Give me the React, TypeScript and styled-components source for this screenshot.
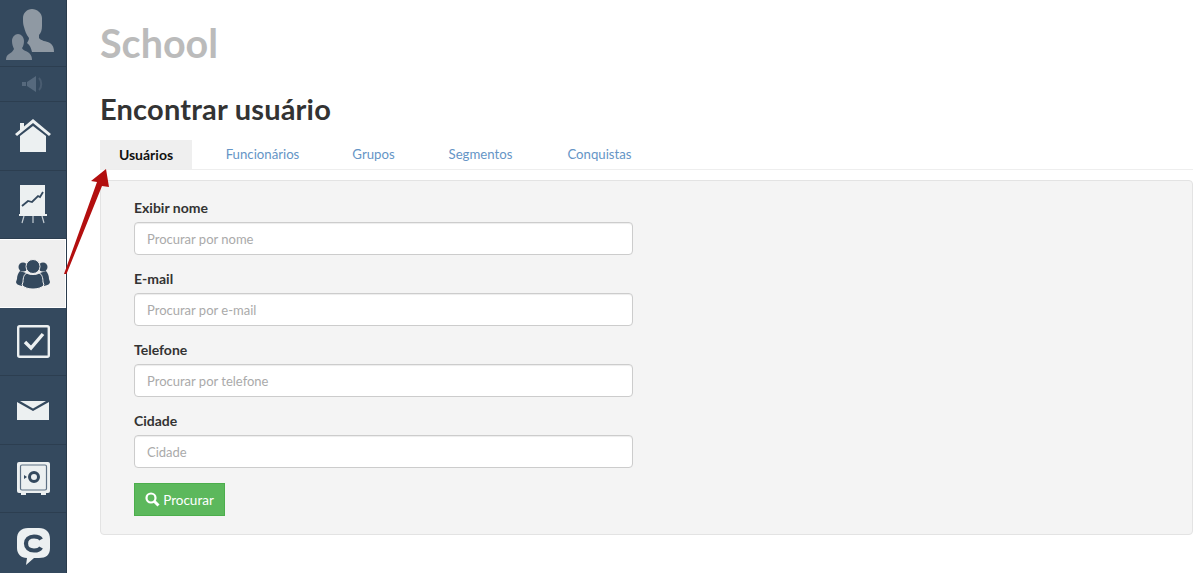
import { FC, ReactNode } from 'react';
import styled, { createGlobalStyle } from 'styled-components'

const GlobalStyle = createGlobalStyle`
  html, body {
    margin: 0;
    padding: 0;
    background: #fff;
    font-family: Lato, "Liberation Sans", sans-serif;
    color: #333;
  }
  * { box-sizing: border-box; }
`

const Page = styled.div`
  position: relative;
  display: flex;
  width: 1200px;
  height: 573px;
  overflow: hidden;
`

const Sidebar = styled.nav`
  flex: 0 0 67px;
  height: 573px;
  overflow: hidden;
  background: #34495e;
  border-right: 1px solid #2a3b4c;
`

const NavItem = styled.div<{ $h: number; $active?: boolean }>`
  display: flex;
  align-items: center;
  justify-content: center;
  height: ${p => p.$h}px;
  color: ${p => (p.$active ? '#34495e' : '#ecf0f1')};
  background: ${p => (p.$active ? '#efefef' : 'transparent')};
  border-bottom: 1px solid ${p => (p.$active ? '#fff' : '#2c3e50')};
  ${p => p.$active && 'border-top: 1px solid #fff; border-right: 1px solid #fff;'}
`

const Main = styled.main`
  flex: 1;
  padding: 0 7px 0 33px;
`

const Brand = styled.h1`
  margin: 0;
  padding-top: 21px;
  height: 82px;
  font-size: 39.5px;
  line-height: 44px;
  font-weight: 700;
  color: #bbb;
`

const Title = styled.h2`
  margin: 0;
  height: 58px;
  padding-top: 9px;
  font-size: 29px;
  line-height: 36px;
  font-weight: 700;
  letter-spacing: 0.2px;
  color: #333;
`

const Tabs = styled.div`
  display: flex;
  height: 30px;
  border-bottom: 1px solid #eee;
`

const Tab = styled.a<{ $active?: boolean; $w: number }>`
  display: block;
  width: ${p => p.$w}px;
  height: 29px;
  text-align: center;
  font-size: ${p => (p.$active ? 14 : 13.2)}px;
  line-height: 29px;
  font-weight: ${p => (p.$active ? 700 : 400)};
  color: ${p => (p.$active ? '#111' : '#6595c6')};
  background: ${p => (p.$active ? '#efefef' : 'transparent')};
`

const Panel = styled.div`
  margin-top: 10px;
  height: 355px;
  padding: 17px 33px 0;
  background: #f4f4f4;
  border: 1px solid #e3e3e3;
  border-radius: 4px;
`

const Field = styled.div`
  width: 499px;
  height: 71px;
`

const Label = styled.label`
  display: block;
  height: 24px;
  font-size: 14px;
  line-height: 20px;
  font-weight: 700;
  color: #333;
`

const Input = styled.input`
  display: block;
  width: 100%;
  height: 33px;
  padding: 0 12px;
  font-family: inherit;
  font-size: 13px;
  color: #555;
  background: #fff;
  border: 1px solid #ccc;
  border-radius: 4px;
  box-shadow: inset 0 1px 1px rgba(0, 0, 0, 0.075);

  &::placeholder {
    color: #aaa;
    opacity: 1;
  }
`

const Submit = styled.button`
  display: flex;
  align-items: center;
  justify-content: center;
  gap: 3px;
  width: 91px;
  height: 33px;
  margin-top: 1px;
  padding: 0;
  font-family: inherit;
  font-size: 13.5px;
  color: #fff;
  background: #5cb85c;
  border: 1px solid #4cae4c;
`

const Arrow = styled.svg`
  position: absolute;
  left: 60px;
  top: 165px;
`

const Avatar = () => (
  <svg width="54" height="56" viewBox="0 0 54 56" fill="#8f99a3">
    <path d="M17 13c0-5 4-9 9-9s10 4 10 9v8c0 4-1 7-3 9v3c2 3 7 3 11 5 3 2 4 5 4 9H26c-1-4-2-7-5-9 1-2 2-3 2-5-3-4-4-7-5-11-1-3-1-5-1-8z" />
    <path d="M6 36c0-4 3-7 6-7s6 3 6 7c0 3-1 6-2 7 1 3 6 3 8 6 1 1 2 3 2 6H0c0-3 1-5 3-6 2-1 4-3 5-5-1-2-2-5-2-8z" opacity=".85" />
  </svg>
)

const Speaker = () => (
  <svg width="24" height="18" viewBox="0 0 24 18" fill="none">
    <path d="M1 7h4v4H1zM6 7l9-6v16l-9-6z" fill="#56697d" />
    <path d="M18 3c3 3 3 9 0 12" stroke="#495c70" strokeWidth="2" />
  </svg>
)

const Home = () => (
  <svg width="36" height="34" viewBox="0 0 36 34" fill="#ecf0f1">
    <path d="M5 4h4v4L5 12z" />
    <path d="M18 0 36 15l-2 2L18 4 2 17l-2-2z" />
    <path d="M18 7 31 17v16H5V17z" />
  </svg>
)

const Chart = () => (
  <svg width="28" height="39" viewBox="0 0 28 39" fill="none">
    <rect x="1" width="25" height="29" fill="#ecf0f1" />
    <path d="M3 21l6-5 4 1 6-6 2 1 3-5" stroke="#34495e" strokeWidth="1.8" />
    <path d="M0 30h28" stroke="#ecf0f1" strokeWidth="2" />
    <path d="M5 31 3 38M14 31v7M23 31l2 7" stroke="#c4ccd3" strokeWidth="1.2" />
  </svg>
)

const Users = () => (
  <svg width="34" height="30" viewBox="0 0 34 30" fill="#34495e">
    <circle cx="7" cy="8" r="4.500" />
    <circle cx="27" cy="8" r="4.500" />
    <path d="M4 12c-2 2-3 5-3 8l-1 3c0 2 2 3 6 4l4-13zM30 12c2 2 3 5 3 8l1 3c0 2-2 3-6 4l-4-13z" />
    <circle cx="17" cy="7.500" r="7" stroke="#efefef" strokeWidth="1" />
    <path d="M11 14c2 2 10 2 12 0 3 1 4 5 4 9l1 3c-2 3-7 4-11 4s-9-1-11-4l1-3c0-4 1-8 4-9z" stroke="#efefef" strokeWidth="1" />
  </svg>
)

const Check = () => (
  <svg width="33" height="33" viewBox="0 0 33 33" fill="none">
    <rect x="1.200" y="1.200" width="30.600" height="30.600" rx="1.500" stroke="#ecf0f1" strokeWidth="2.400" />
    <path d="m8 17 6 6 12-14" stroke="#ecf0f1" strokeWidth="3.400" />
  </svg>
)

const Mail = () => (
  <svg width="32" height="19" viewBox="0 0 32 19" fill="#ecf0f1">
    <path d="M0 1l16 9L32 1v18H0z" />
    <path d="M3 0h26L16 7.500z" />
  </svg>
)

const Safe = () => (
  <svg width="33" height="33" viewBox="0 0 33 33" fill="none">
    <rect width="33" height="31" rx="2" fill="#ecf0f1" />
    <rect x="3.500" y="3" width="26" height="25" rx="1.500" stroke="#5d7084" strokeWidth="1.200" />
    <circle cx="17" cy="15" r="4.500" stroke="#34495e" strokeWidth="3" />
    <path d="M7 13v4l3-2z" fill="#34495e" />
    <path d="M4 31h5v2H4zM24 31h5v2h-5z" fill="#ecf0f1" />
  </svg>
)

const Chat = () => (
  <svg width="33" height="37" viewBox="0 0 33 37" fill="none">
    <path d="M11 0h11c7 0 11 4 11 11v9c0 7-4 10-11 10h-5l-8 7 1-7C4 30 0 26 0 20v-9C0 4 4 0 11 0z" fill="#ecf0f1" />
    <path d="M24 11.500c-1-2-4-3-7-3-5 0-8 3-8 7s3 7 8 7c3 0 6-1 7-3" stroke="#34495e" strokeWidth="4.200" />
  </svg>
)

const Search = () => (
  <svg width="15" height="15" viewBox="0 0 15 15" fill="none" stroke="#fff">
    <circle cx="6" cy="6" r="4.500" strokeWidth="2.200" />
    <path d="m9.500 9.500 4 4" strokeWidth="3" />
  </svg>
)

type NavEntry = { h: number; icon: ReactNode; active?: boolean }

const nav: NavEntry[] = [
  { h: 67, icon: <Avatar /> },
  { h: 35, icon: <Speaker /> },
  { h: 69, icon: <Home /> },
  { h: 68, icon: <Chart /> },
  { h: 69, icon: <Users />, active: true },
  { h: 68, icon: <Check /> },
  { h: 69, icon: <Mail /> },
  { h: 68, icon: <Safe /> },
  { h: 68, icon: <Chat /> },
]

const tabs = [
  { name: 'Usuários', w: 92, active: true },
  { name: 'Funcionários', w: 141 },
  { name: 'Grupos', w: 81 },
  { name: 'Segmentos', w: 133 },
  { name: 'Conquistas', w: 105 },
]

const fields = [
  { label: 'Exibir nome', ph: 'Procurar por nome' },
  { label: 'E-mail', ph: 'Procurar por e-mail' },
  { label: 'Telefone', ph: 'Procurar por telefone' },
  { label: 'Cidade', ph: 'Cidade' },
]

export const App: FC = () => {
  return (
    <Page>
      <GlobalStyle />
      <Sidebar>
        {nav.map((item, i) => (
          <NavItem key={i} $h={item.h} $active={item.active}>
            {item.icon}
          </NavItem>
        ))}
      </Sidebar>
      <Main>
        <Brand>School</Brand>
        <Title>Encontrar usuário</Title>
        <Tabs>
          {tabs.map(t => (
            <Tab key={t.name} $w={t.w} $active={t.active}>
              {t.name}
            </Tab>
          ))}
        </Tabs>
        <Panel>
          {fields.map(f => (
            <Field key={f.label}>
              <Label>{f.label}</Label>
              <Input placeholder={f.ph} />
            </Field>
          ))}
          <Submit>
            <Search />
            Procurar
          </Submit>
        </Panel>
      </Main>
      <Arrow width="50" height="112" viewBox="0 0 50 112">
        <path d="M4 109 6.500 109 42 21 49 22 46 4 31 16 37 17Z" fill="#b30f0f" />
      </Arrow>
    </Page>
  );
};

export default App
